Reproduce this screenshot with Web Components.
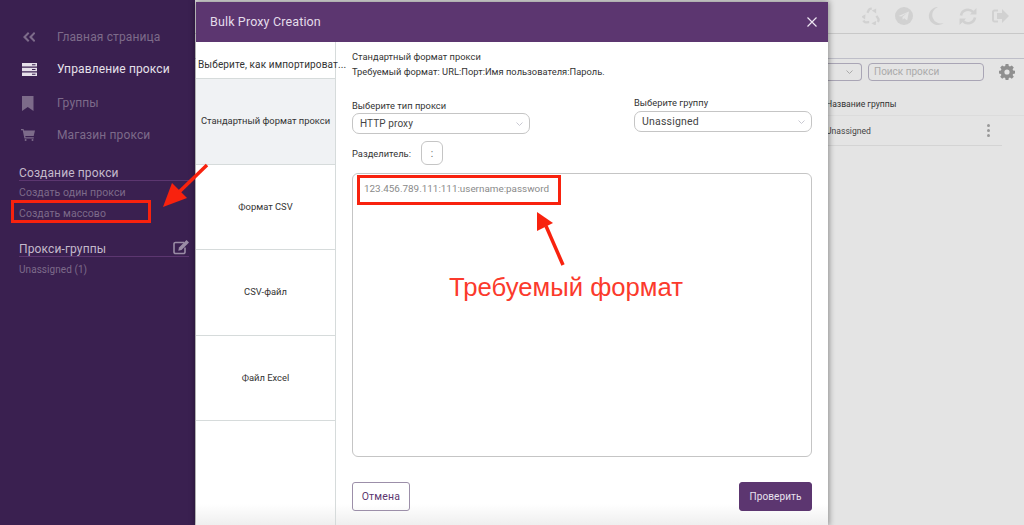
<!DOCTYPE html>
<html lang="ru"><head><meta charset="utf-8"><title>Bulk Proxy Creation</title>
<style>
html,body{margin:0;height:525px;overflow:hidden;background:#e4e4e4;font-family:Roboto,"Liberation Sans",sans-serif}
</style></head><body>
<app-shell>
  <side-bar slot="side"></side-bar>
  <main-view slot="main"></main-view>
  <bulk-modal slot="over"></bulk-modal>
  <red-notes slot="over"></red-notes>
</app-shell>
<script>
function def(name,html){customElements.define(name,class extends HTMLElement{constructor(){super();this.attachShadow({mode:'open'}).innerHTML=html}})}

def('app-shell',`<style>:host{display:flex;width:1024px;height:525px;position:relative;overflow:hidden}
::slotted([slot=side]){flex:0 0 195px}::slotted([slot=main]){flex:1}</style>
<slot name="side"></slot><slot name="main"></slot><slot name="over"></slot>`);

def('nav-item',`<style>:host{display:flex;align-items:center;height:32px;font:12px Roboto,sans-serif;letter-spacing:.13px;color:#7d6b8a}
:host([active]){color:#e6e0ea}.i{width:57px;display:flex;justify-content:center;padding-right:2px;box-sizing:border-box}
::slotted(svg){display:block;margin-right:-1px}</style><div class="i"><slot name="icon"></slot></div><slot></slot>`);

def('side-head',`<style>:host{display:flex;justify-content:space-between;align-items:flex-end;margin:0 6px 0 19px;height:19px;border-bottom:1px solid #5c3670;font:12px Roboto,sans-serif;letter-spacing:.12px;color:#c4bacb}</style><slot></slot>`);

def('side-link',`<style>:host{display:block;margin-left:19px;height:21px;font:10.500px/21px Roboto,sans-serif;letter-spacing:.07px;color:#7d6b8a}</style><slot></slot>`);

def('side-bar',`<style>:host{display:block;background:#3a2050;box-sizing:border-box;padding-top:21px;height:525px}</style>
<nav-item><svg slot="icon" width="13" height="10" viewBox="0 0 13 10"><path d="M6 0 1 5l5 5 1.400-1.400L4 5l3.400-3.600zM12 0 7 5l5 5 1.400-1.400L10 5l3.400-3.600z" fill="#7d6b8a"/></svg>Главная страница</nav-item>
<nav-item active><svg slot="icon" width="15" height="13" viewBox="0 0 15 13" style="margin-left:2px"><path fill="#e6e0ea" d="M0 0h15v3.600H0zM0 4.700h15v3.600H0zM0 9.400h15V13H0z"/><path fill="#3a2050" d="M10 1.300h3.500v1H10zM10 6h3.500v1H10zM10 10.700h3.500v1H10z"/></svg>Управление прокси</nav-item>
<div style="height:2px"></div>
<nav-item><svg slot="icon" width="12" height="15" viewBox="0 0 12 15"><path fill="#7d6b8a" d="M0 0h11.500v15L5.750 11 0 15z"/></svg>Группы</nav-item>
<nav-item><svg slot="icon" width="14" height="12" viewBox="0 0 14 12"><path fill="#7d6b8a" d="M0 0h2.500l.5 1.500H14l-1.300 5.500H4.300l.3 1.300h8.200V9.500H3.400L1.700 1.200H0z"/><circle cx="4.600" cy="11" r="1" fill="#7d6b8a"/><circle cx="11.500" cy="11" r="1" fill="#7d6b8a"/></svg>Магазин прокси</nav-item>
<div style="height:10px"></div>
<side-head>Создание прокси</side-head>
<side-link style="margin-top:1px">Создать один прокси</side-link>
<side-link>Создать массово</side-link>
<div style="height:13px"></div>
<side-head>Прокси-группы<svg width="16" height="16" viewBox="0 0 16 15" style="margin-bottom:1px"><path fill="none" stroke="#9a8ca5" stroke-width="1.600" d="M11 3H2.500A1.500 1.500 0 0 0 1 4.500v8A1.500 1.500 0 0 0 2.500 14h8a1.500 1.500 0 0 0 1.500-1.500V8"/><path fill="#9a8ca5" d="M13.500.5 16 3l-7.500 7.500-3.200.7.700-3.200z"/></svg></side-head>
<side-link style="margin-top:2px;font-size:10px;letter-spacing:.06px">Unassigned (1)</side-link>`);

def('main-view',`<style>:host{display:flex;flex-direction:column;height:525px;background:#e4e4e4;color:#444;font:10px Roboto,sans-serif}
.top{height:34px;box-sizing:border-box;border-bottom:1.500px solid #c8c8c8;display:flex;justify-content:flex-end;align-items:center;gap:15px;padding:0 15px 1px 0}
.sub{height:25px;box-sizing:border-box;border-bottom:1.500px solid #bebec8}
.ctl{display:flex;justify-content:flex-end;align-items:center;gap:6px;padding:4px 9px 0 0}
.sel{width:40px;height:18px;border:1px solid #a9a5b5;border-left:0;border-radius:0 4px 4px 0;display:flex;justify-content:flex-end;align-items:center;padding-right:8px;box-sizing:border-box}
.search{width:116px;height:18px;border:1px solid #a9a5b5;border-radius:4px;box-sizing:border-box;padding-left:5px;font-size:10px;line-height:16px;color:#aaa}
.cog{margin-left:9px}
.th{margin:13px 0 0 631px;height:21px;border-bottom:1px solid #dcdcdc;font-size:8.600px;line-height:20px;color:#333}
.tr{margin:0 22px 0 631px;height:29px;border-bottom:1px solid #d4d4d4;display:flex;justify-content:space-between;align-items:center;font-size:8.600px;color:#444}
.dots{display:flex;flex-direction:column;gap:2px;margin-right:12px}.dots i{width:3px;height:3px;border-radius:50%;background:#999}</style>
<div class="top">
<svg width="18" height="18" viewBox="0 0 18 18"><g fill="none" stroke="#d1d1d1" stroke-width="2.300"><path d="M5.400 5.800 6.900 2.900Q7.500 1.700 9 1.700H9.800"/><path transform="rotate(120 9 10)" d="M5.400 5.800 6.900 2.900Q7.500 1.700 9 1.700H9.800"/><path transform="rotate(240 9 10)" d="M5.400 5.800 6.900 2.900Q7.500 1.700 9 1.700H9.800"/></g><g fill="#d1d1d1"><path d="M9.800 3.600 14.200 1.600 14.200 6.600z"/><path transform="rotate(120 9 10)" d="M9.800 3.600 14.200 1.600 14.200 6.600z"/><path transform="rotate(240 9 10)" d="M9.800 3.600 14.200 1.600 14.200 6.600z"/></g></svg>
<svg width="18" height="18" viewBox="0 0 18 18"><circle cx="9" cy="9" r="9" fill="#d1d1d1"/><path fill="#e4e4e4" d="M3.500 9 14 4.500l-1.800 9-3-2.200-1.500 1.500-.3-2.800 4.800-4.300-6 3.700z"/></svg>
<svg width="16" height="18" viewBox="0 0 16 18"><path fill="#d1d1d1" d="M10 0a9 9 0 1 0 5.500 16A8 8 0 0 1 10 0z"/></svg>
<svg width="18" height="17" viewBox="0 0 18 17"><path fill="none" stroke="#d1d1d1" stroke-width="2.600" d="M2 7.500A7 7 0 0 1 14 4M16 9.500A7 7 0 0 1 4 13"/><path fill="#d1d1d1" d="M17.500 0v6.500H11zM.5 17v-6.500H7z"/></svg>
<svg width="17" height="14" viewBox="0 0 17 14"><path fill="none" stroke="#d1d1d1" stroke-width="2" d="M6 1.500H2.500A1.500 1.500 0 0 0 1 3v8a1.500 1.500 0 0 0 1.500 1.500H6"/><path fill="#d1d1d1" d="M10 0l7 7-7 7v-4H5V4h5z"/></svg>
</div>
<div class="sub"></div>
<div class="ctl"><div class="sel"><svg width="7" height="4" viewBox="0 0 7 4"><path d="M.5.5 3.500 3.500 6.500.5" fill="none" stroke="#aaa"/></svg></div><div class="search">Поиск прокси</div>
<svg class="cog" width="16" height="16" viewBox="0 0 16 16"><path fill="#8f8f8f" fill-rule="evenodd" d="M6.600 0h2.800l.4 2.100 1.200.5L12.800 1.400l2 2-1.200 1.800.5 1.200 1.900.3v2.800l-1.900.4-.5 1.200 1.200 1.700-2 2-1.800-1.200-1.200.5-.4 1.900H6.600l-.4-1.900-1.200-.5-1.800 1.200-2-2 1.200-1.700-.5-1.200L0 9.500V6.700l1.900-.3.500-1.200-1.200-1.800 2-2L5 2.600l1.200-.5zM8 5.400a2.600 2.600 0 1 0 0 5.200 2.600 2.600 0 0 0 0-5.200z"/></svg></div>
<div class="th">Название группы</div>
<div class="tr"><span>Unassigned</span><div class="dots"><i></i><i></i><i></i></div></div>`);

def('tab-item',`<style>:host{display:flex;align-items:center;justify-content:center;height:85.500px;box-sizing:border-box;border-bottom:1px solid #d6dbdb;padding-bottom:1px;font:9.400px Roboto,sans-serif;color:#333;text-align:center;white-space:nowrap}
:host([on]){background:#f0f2f4}:host([head]){height:37px;justify-content:flex-start;padding:8px 2px 0;font-size:10px;letter-spacing:.12px}</style><slot></slot>`);

def('select-box',`<style>:host{display:flex;align-items:center;justify-content:space-between;box-sizing:border-box;width:178px;height:21px;border:1px solid #c5c5c5;border-radius:7px;padding:0 6px 0 7px;font:10.500px Roboto,sans-serif;letter-spacing:.2px;color:#444}</style><slot></slot><svg width="7" height="4" viewBox="0 0 7 4"><path d="M.5.5 3.500 3.500 6.500.5" fill="none" stroke="#c9c9d2"/></svg>`);

def('act-btn',`<style>:host{display:flex;align-items:center;justify-content:center;box-sizing:border-box;height:29px;border-radius:3px;font:10.500px Roboto,sans-serif;letter-spacing:.2px;width:58px;border:1px solid #9c8fa9;color:#5c3670}
:host([main]){width:73px;background:#5c3670;border-color:#5c3670;color:#e9e2ee;font-size:10px;letter-spacing:.1px}</style><slot></slot>`);

def('bulk-modal',`<style>:host{position:absolute;left:196px;top:2px;width:632px;height:523px;background:#fff;display:flex;flex-direction:column;box-shadow:0 0 6px 1px rgba(0,0,0,.4);font:10px Roboto,sans-serif;color:#333}
header{height:39px;flex:none;background:#5c3670;display:flex;align-items:center;justify-content:space-between;padding:0 11px 1px 14px;font-size:12.500px;letter-spacing:.14px;color:#e4dcea}
.body{flex:1;display:flex;min-height:0;background:linear-gradient(#fff 462px,#efefef 100%)}
.tabs{width:140px;flex:none;box-sizing:border-box;border-right:1px solid #d6dbdb}
.pane{flex:1;padding:10px 16px 0 16px;min-width:0;display:flex;flex-direction:column}
.l{height:15px;line-height:15px;font-size:9.300px;letter-spacing:.03px}
.row{display:flex;justify-content:space-between;margin-top:19px;height:43px}
.col2{margin-top:-2px}
.col2 .l{margin:-1px 0 1px}
.sep{display:flex;align-items:center;height:24px}
.sep span{width:69px;font-size:9.300px;letter-spacing:.03px}
.sep b{width:22px;height:24px;border:1px solid #c5c5c5;border-radius:6px;box-sizing:border-box;display:flex;align-items:center;justify-content:center;font-weight:400;color:#666}
.ta{margin-top:8px;height:284px;border:1px solid #c5c5c5;border-radius:6px;box-sizing:border-box;padding:8px 11px;font-size:9.900px;line-height:13px;color:#8a8a8a}
.foot{display:flex;justify-content:space-between;margin-top:25px}</style>
<header>Bulk Proxy Creation<svg width="10" height="10" viewBox="0 0 10 10"><path d="M.5.5l9 9M9.500.5l-9 9" stroke="#eee6f2" stroke-width="1.200"/></svg></header>
<div class="body">
<div class="tabs"><tab-item head>Выберите, как импортироват...</tab-item><tab-item on>Стандартный формат прокси</tab-item><tab-item>Формат CSV</tab-item><tab-item>CSV-файл</tab-item><tab-item>Файл Excel</tab-item></div>
<div class="pane">
<div class="l" style="margin-top:-3px">Стандартный формат прокси</div>
<div class="l">Требуемый формат: URL:Порт:Имя пользователя:Пароль.</div>
<div class="row"><div><div class="l">Выберите тип прокси</div><select-box style="font-size:10px;letter-spacing:.1px">HTTP proxy</select-box></div>
<div class="col2"><div class="l">Выберите группу</div><select-box>Unassigned</select-box></div></div>
<div class="sep"><span>Разделитель:</span><b>:</b></div>
<div class="ta">123.456.789.111:111:username:password</div>
<div class="foot"><act-btn>Отмена</act-btn><act-btn main>Проверить</act-btn></div>
</div></div>`);

def('red-notes',`<style>:host{position:absolute;left:0;top:0;width:1024px;height:525px;pointer-events:none}
.r{position:absolute;box-sizing:border-box;border:3.500px solid #f8220e}
.t{position:absolute;left:449px;top:271px;font:25.700px/32px "Liberation Sans",sans-serif;color:#fb3a2c;white-space:nowrap}
svg{position:absolute;left:0;top:0}</style>
<div class="r" style="left:11px;top:200px;width:140px;height:22.500px"></div>
<div class="r" style="left:357px;top:174.500px;width:203.500px;height:30px"></div>
<svg width="1024" height="525"><path d="M207 165 176 195" stroke="#f8220e" stroke-width="3.500"/><path d="M163 207 172 183 187 198z" fill="#f8220e"/>
<path d="M563 265 546 226" stroke="#f8220e" stroke-width="3.500"/><path d="M537 212 537 231 553 223z" fill="#f8220e"/></svg>
<div class="t">Требуемый формат</div>`);
</script>
</body></html>
